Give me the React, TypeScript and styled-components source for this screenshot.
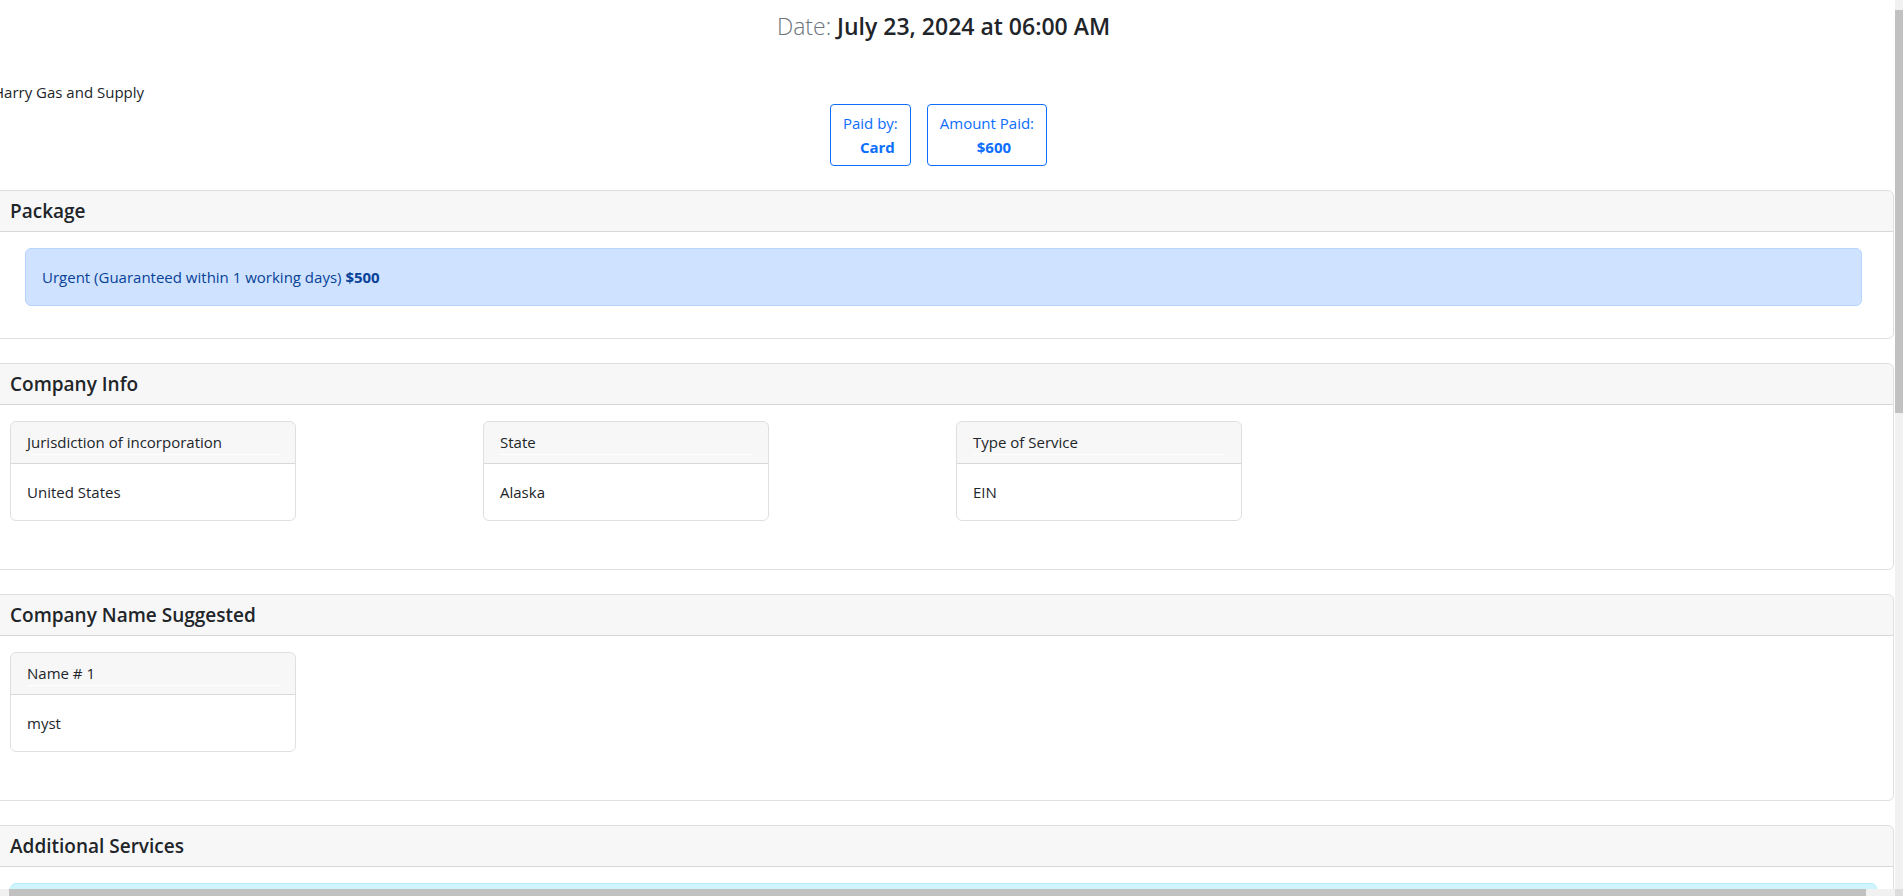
import React from "react";
import styled, { createGlobalStyle } from "styled-components";

const GlobalStyle = createGlobalStyle`
  * { box-sizing: border-box; }
  html, body {
    margin: 0;
    padding: 0;
    overflow: hidden;
    background: #fff;
  }
  body {
    font-family: "Open Sans", "Noto Sans", sans-serif;
    font-size: 15px;
    line-height: 24px;
    color: #212529;
  }
`;

const Page = styled.div`
  width: 1901px;
  margin-left: -7px;
`;

const DateTitle = styled.h4`
  margin: 12px 0 0;
  text-align: center;
  font-size: 23px;
  line-height: 29px;
  font-weight: 600;
`;

const DateLabel = styled.span`
  font-weight: 300;
  color: #6c757d;
`;

const CompanyName = styled.div`
  margin-top: 39px;
  line-height: 24px;
`;

const PaymentRow = styled.div`
  display: flex;
  justify-content: center;
  gap: 16px;
  padding-right: 10px;
`;

const PaymentBox = styled.div`
  border: 1px solid #0d6efd;
  border-radius: 4px;
  padding: 6px 12px;
  color: #0d6efd;
  text-align: center;
  line-height: 24px;
`;

const PaymentValue = styled.b`
  display: block;
  font-weight: 700;
  padding-left: 14px;
`;

const Section = styled.section<{ $first?: boolean }>`
  margin-top: ${(p) => (p.$first ? "24px" : "0")};
  margin-bottom: 24px;
  border: 1px solid rgba(0, 0, 0, 0.125);
  border-radius: 6px;
  overflow: hidden;
`;

const SectionHeader = styled.div`
  background: rgba(0, 0, 0, 0.03);
  padding: 8px 16px;
  border-bottom: 1px solid rgba(0, 0, 0, 0.125);
`;

const SectionTitle = styled.h5`
  margin: 0;
  font-size: 19px;
  font-weight: 600;
  line-height: 24px;
`;

const SectionBody = styled.div`
  padding: 16px;
`;

const Alert = styled.div<{ $variant: "primary" | "info"; $inset?: boolean }>`
  margin: 0 ${(p) => (p.$inset ? "15px" : "0")} 16px;
  padding: 16px;
  border-radius: 6px;
  border: 1px solid ${(p) => (p.$variant === "primary" ? "#b6d4fe" : "#b6effb")};
  background: ${(p) => (p.$variant === "primary" ? "#cfe2ff" : "#cff4fc")};
  color: ${(p) => (p.$variant === "primary" ? "#084298" : "#055160")};
  line-height: 24px;
`;

const CardGrid = styled.div`
  display: grid;
  grid-template-columns: repeat(4, 473px);
  margin-bottom: 32px;
`;

const InfoCard = styled.div`
  width: 286px;
  border: 1px solid rgba(0, 0, 0, 0.125);
  border-radius: 6px;
  overflow: hidden;
`;

const InfoHeader = styled.div`
  background: rgba(0, 0, 0, 0.03);
  padding: 8px 16px;
  border-bottom: 1px solid rgba(0, 0, 0, 0.125);
`;

const InfoLabel = styled.div`
  line-height: 24px;
  border-bottom: 1px solid #fff;
`;

const InfoValue = styled.div`
  padding: 16px;
  line-height: 24px;
`;

const VScroll = styled.div`
  position: fixed;
  top: 0;
  right: 0;
  width: 8px;
  height: 889px;
  background: #f1f1f1;
`;

const VThumb = styled.div`
  margin-top: 10px;
  height: 403px;
  background: #c1c1c1;
`;

const HScroll = styled.div`
  position: fixed;
  left: 0;
  bottom: 0;
  width: 1895px;
  height: 7px;
  background: #f1f1f1;
  padding-left: 9px;
`;

const HThumb = styled.div`
  width: 1857px;
  height: 100%;
  background: #c1c1c1;
`;

const Corner = styled.div`
  position: fixed;
  right: 0;
  bottom: 0;
  width: 8px;
  height: 7px;
  background: #dcdcdc;
`;

type Field = { label: string; value: string };

const companyInfo: Field[] = [
  { label: "Jurisdiction of incorporation", value: "United States" },
  { label: "State", value: "Alaska" },
  { label: "Type of Service", value: "EIN" },
];

const names: Field[] = [{ label: "Name # 1", value: "myst" }];

const FieldCards = ({ fields }: { fields: Field[] }) => (
  <CardGrid>
    {fields.map((f) => (
      <InfoCard key={f.label}>
        <InfoHeader>
          <InfoLabel>{f.label}</InfoLabel>
        </InfoHeader>
        <InfoValue>{f.value}</InfoValue>
      </InfoCard>
    ))}
  </CardGrid>
);

const App = () => {
  return (
    <>
      <GlobalStyle />
      <Page>
        <DateTitle>
          <DateLabel>Date:</DateLabel> July 23, 2024 at 06:00 AM
        </DateTitle>
        <CompanyName>Harry Gas and Supply</CompanyName>
        <PaymentRow>
          <PaymentBox>
            Paid by:
            <PaymentValue>Card</PaymentValue>
          </PaymentBox>
          <PaymentBox>
            Amount Paid:
            <PaymentValue>$600</PaymentValue>
          </PaymentBox>
        </PaymentRow>

        <Section $first>
          <SectionHeader>
            <SectionTitle>Package</SectionTitle>
          </SectionHeader>
          <SectionBody>
            <Alert $variant="primary" $inset>
              Urgent (Guaranteed within 1 working days) <b>$500</b>
            </Alert>
          </SectionBody>
        </Section>

        <Section>
          <SectionHeader>
            <SectionTitle>Company Info</SectionTitle>
          </SectionHeader>
          <SectionBody>
            <FieldCards fields={companyInfo} />
          </SectionBody>
        </Section>

        <Section>
          <SectionHeader>
            <SectionTitle>Company Name Suggested</SectionTitle>
          </SectionHeader>
          <SectionBody>
            <FieldCards fields={names} />
          </SectionBody>
        </Section>

        <Section>
          <SectionHeader>
            <SectionTitle>Additional Services</SectionTitle>
          </SectionHeader>
          <SectionBody>
            <Alert $variant="info">No additional services selected</Alert>
          </SectionBody>
        </Section>
      </Page>
      <VScroll>
        <VThumb />
      </VScroll>
      <HScroll>
        <HThumb />
      </HScroll>
      <Corner />
    </>
  );
};

export default App;
